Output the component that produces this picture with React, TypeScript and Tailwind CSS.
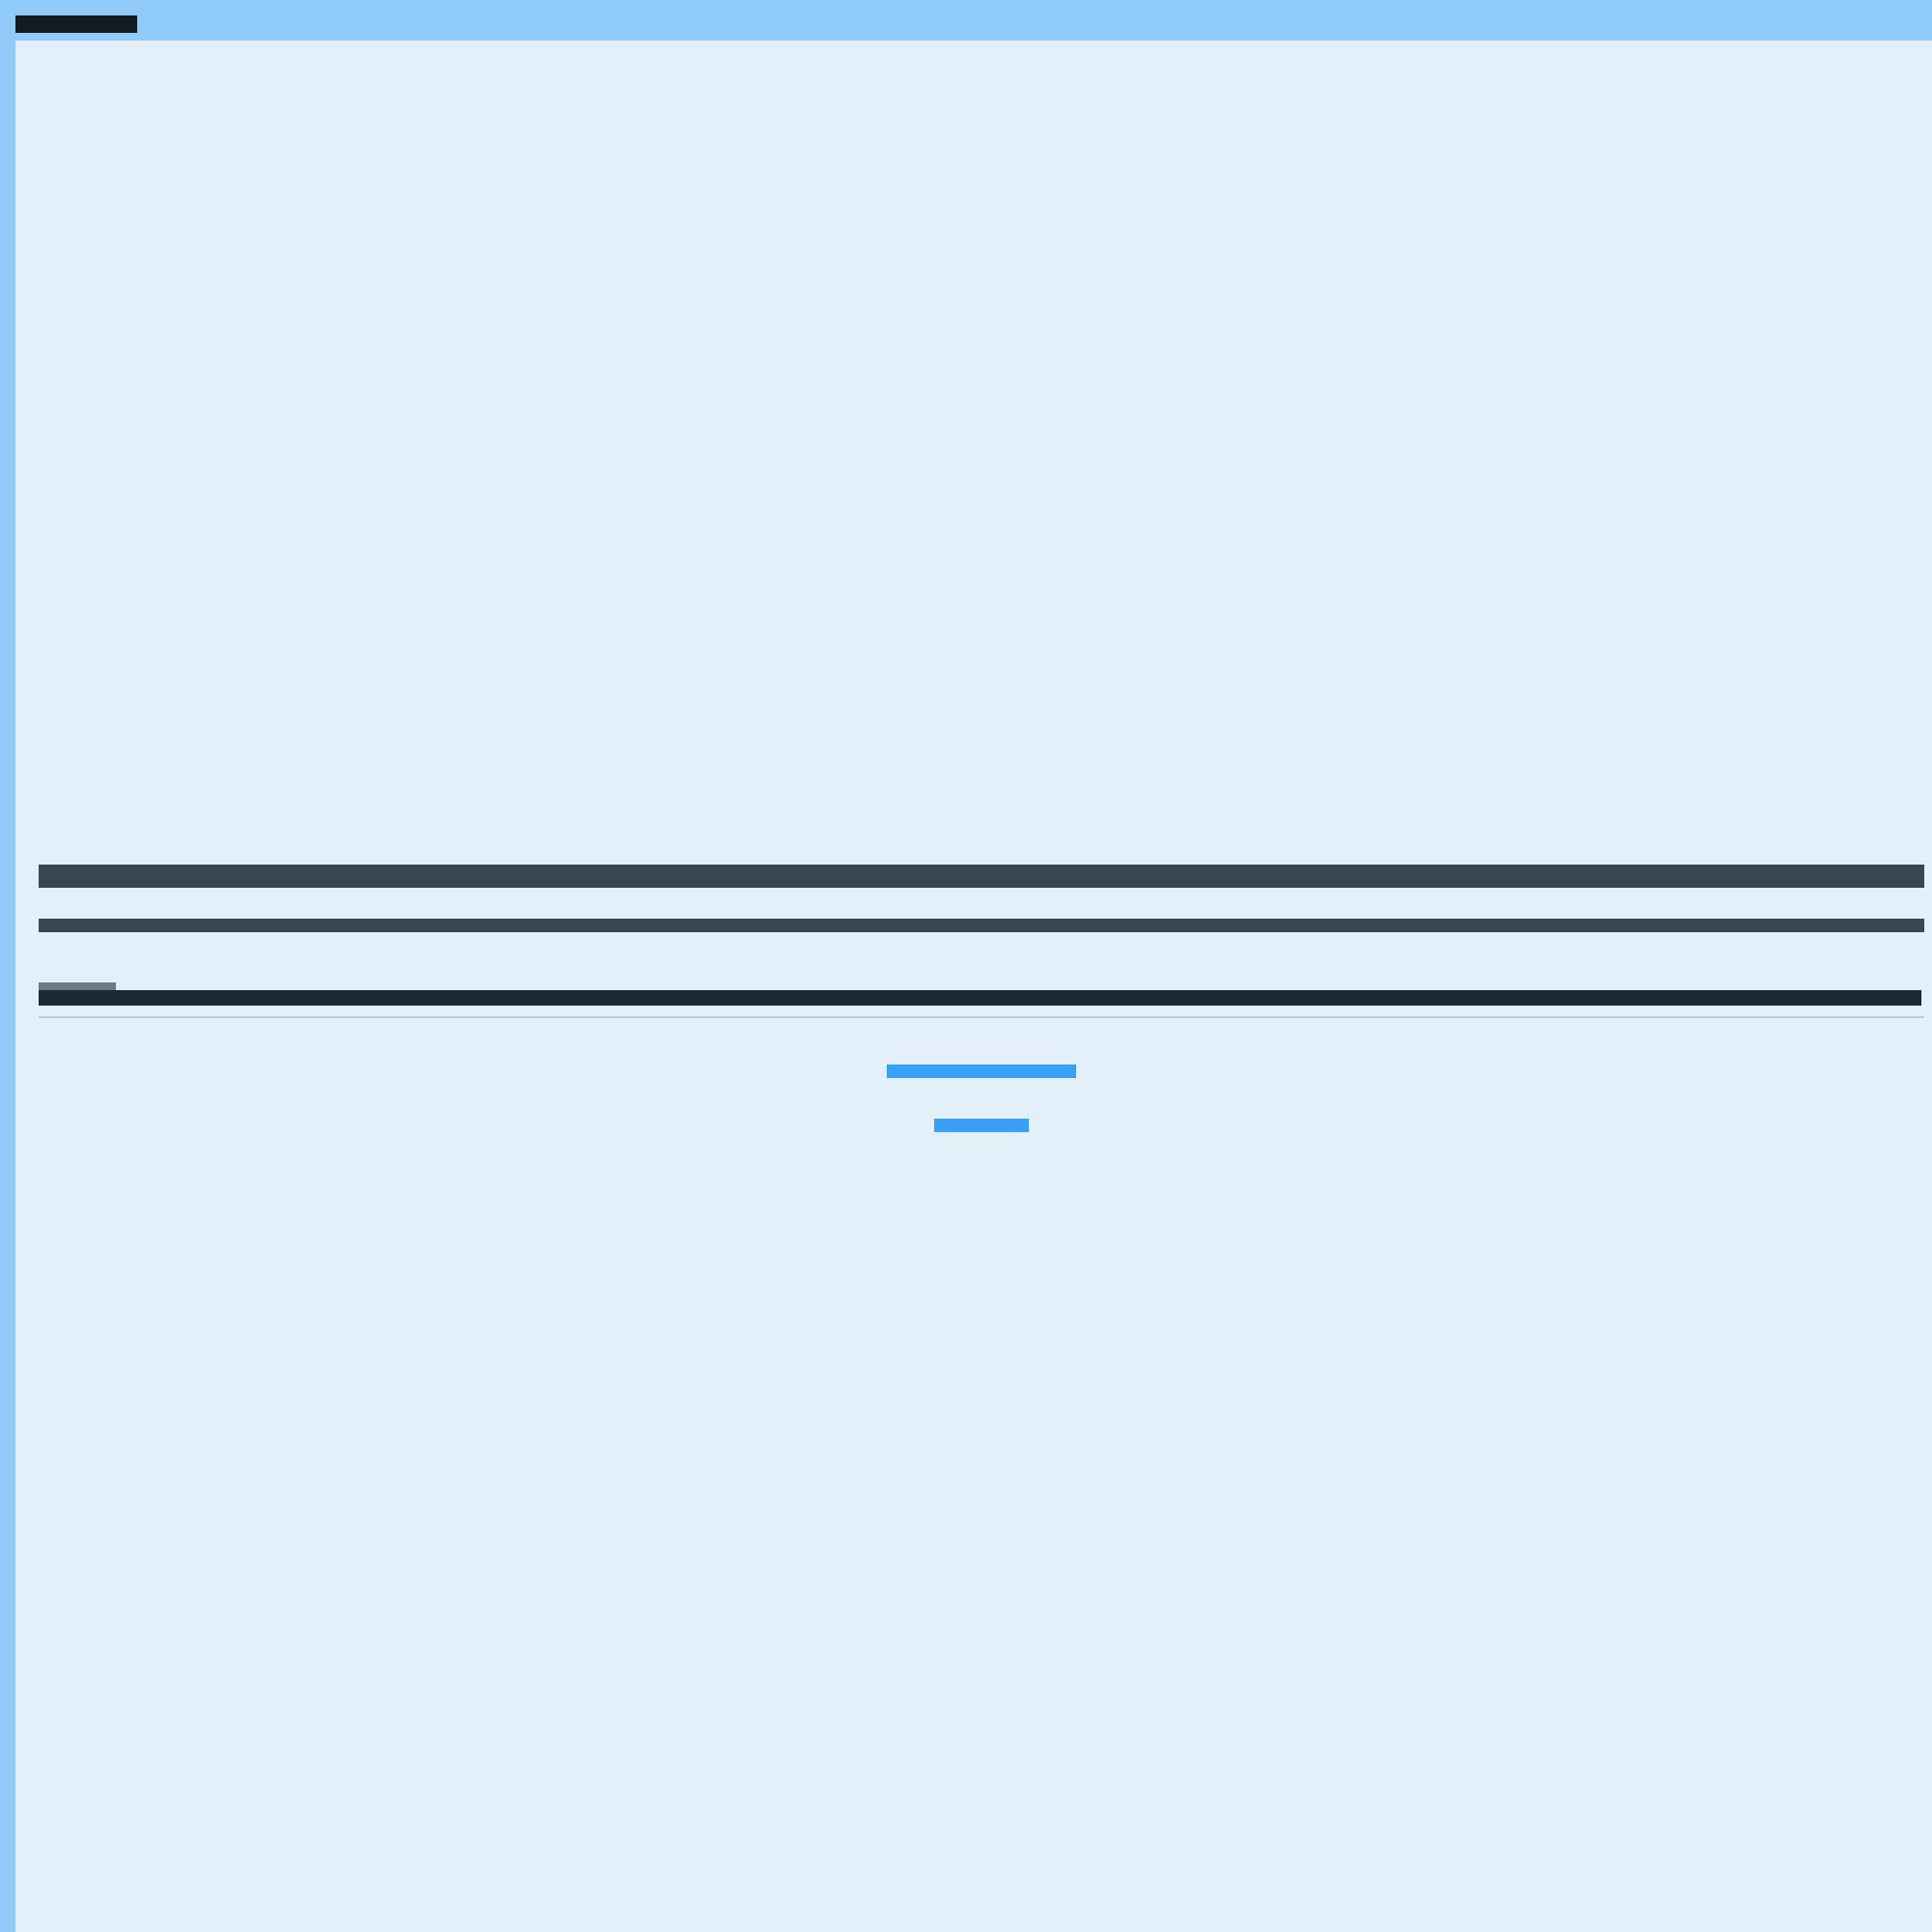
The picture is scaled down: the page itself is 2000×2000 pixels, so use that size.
export default function App() {
  return (
    <div className="w-[2000px] h-[2000px] flex flex-col bg-[#90caf9]" style={{ fontFamily: '"Liberation Sans", sans-serif' }}>
      <header className="h-[42px] shrink-0 flex items-start pl-4 pt-4">
        <div className="w-[126px] h-[18px] bg-[#121a22]" />
      </header>
      <div className="flex flex-1">
        <aside className="w-4 shrink-0" />
        <main className="flex-1 bg-[#e3f0fa] pl-6 pr-2 pt-[853px]">
          <div className="h-6 bg-[#3a4650]" />
          <div className="h-[14px] bg-[#3a4650] mt-8" />
          <div className="mt-[52px] w-20 h-2 bg-[#6c7a84]" />
          <div className="h-4 bg-[#1c2933] mr-[3px]" />
          <div className="mt-[11px] h-[2px] bg-[#bfcbd6]" />
          <div className="flex flex-col items-center pt-12">
            <div className="w-[196px] h-[14px] bg-[#3aa0f5]" />
            <div className="w-[98px] h-[14px] bg-[#3aa0f5] mt-[42px]" />
          </div>
        </main>
      </div>
    </div>
  );
}
